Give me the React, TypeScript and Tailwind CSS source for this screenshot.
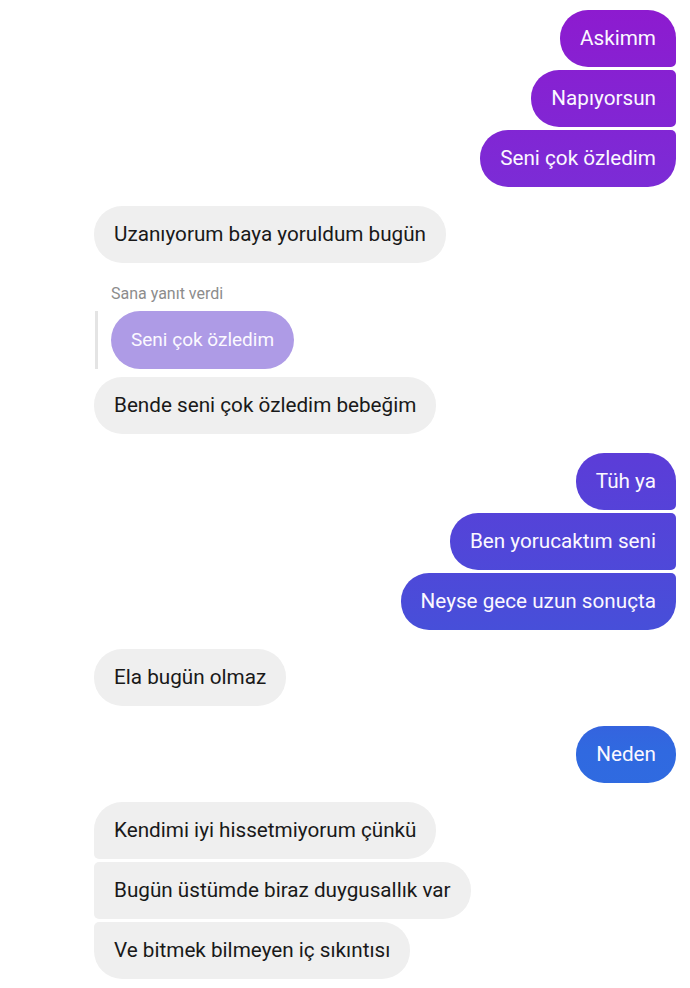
import clsx from "clsx";

type Pos = "single" | "first" | "middle" | "last";

const sentShape: Record<Pos, string> = {
  single: "rounded-[28px]",
  first: "rounded-l-[28px] rounded-tr-[28px] rounded-br-[5px]",
  middle: "rounded-l-[28px] rounded-r-[5px]",
  last: "rounded-l-[28px] rounded-tr-[5px] rounded-br-[28px]",
};

const recvShape: Record<Pos, string> = {
  single: "rounded-[28px]",
  first: "rounded-r-[28px] rounded-tl-[28px] rounded-bl-[5px]",
  middle: "rounded-r-[28px] rounded-l-[5px]",
  last: "rounded-r-[28px] rounded-tl-[5px] rounded-bl-[28px]",
};

function pos(i: number, n: number): Pos {
  if (n === 1) return "single";
  if (i === 0) return "first";
  if (i === n - 1) return "last";
  return "middle";
}

function Sent({ lines }: { lines: string[] }) {
  return (
    <div className="flex flex-col items-end gap-[3px] pr-[14px]">
      {lines.map((t, i) => (
        <div
          key={t}
          className={clsx(
            "flex h-[57px] items-center bg-fixed px-5 text-[20.7px] text-[#fbf8ff] bg-[linear-gradient(180deg,#8e1acf_0px,#7b2cd6_190px,#5b3dd8_460px,#474fd9_630px,#3069e0_750px,#2c73e2_988px)]",
            sentShape[pos(i, lines.length)]
          )}
        >
          {t}
        </div>
      ))}
    </div>
  );
}

function Received({ lines }: { lines: string[] }) {
  return (
    <div className="flex flex-col items-start gap-[3px] pl-[94px]">
      {lines.map((t, i) => (
        <div
          key={t}
          className={clsx(
            "flex h-[57px] items-center bg-[#efefef] px-5 text-[20.7px] text-[#191919]",
            recvShape[pos(i, lines.length)]
          )}
        >
          {t}
        </div>
      ))}
    </div>
  );
}

export default function App() {
  return (
    <div className="min-h-[988px] bg-white pt-[10px] font-['Roboto',_'Noto_Sans',_sans-serif]">
      <Sent lines={["Askimm", "Napıyorsun", "Seni çok özledim"]} />

      <div className="mt-[19px]">
        <Received lines={["Uzanıyorum baya yoruldum bugün"]} />
      </div>

      {/* quoted reply */}
      <div className="mt-[22px] pl-[111px] text-[16px] leading-[18px] text-[#8c8c8c]">Sana yanıt verdi</div>
      <div className="mt-[8px] flex pl-[95px]">
        <div className="w-[3px] bg-[#e4e4e4]" />
        <div className="ml-[13px] flex h-[58px] items-center rounded-[29px] bg-[#ae9be6] px-5 text-[19px] text-[#fbf9ff]">
          Seni çok özledim
        </div>
      </div>
      <div className="mt-[8px]">
        <Received lines={["Bende seni çok özledim bebeğim"]} />
      </div>

      <div className="mt-[19px]">
        <Sent lines={["Tüh ya", "Ben yorucaktım seni", "Neyse gece uzun sonuçta"]} />
      </div>

      <div className="mt-[19px]">
        <Received lines={["Ela bugün olmaz"]} />
      </div>

      <div className="mt-[20px]">
        <Sent lines={["Neden"]} />
      </div>

      <div className="mt-[19px]">
        <Received
          lines={[
            "Kendimi iyi hissetmiyorum çünkü",
            "Bugün üstümde biraz duygusallık var",
            "Ve bitmek bilmeyen iç sıkıntısı",
          ]}
        />
      </div>
    </div>
  );
}
